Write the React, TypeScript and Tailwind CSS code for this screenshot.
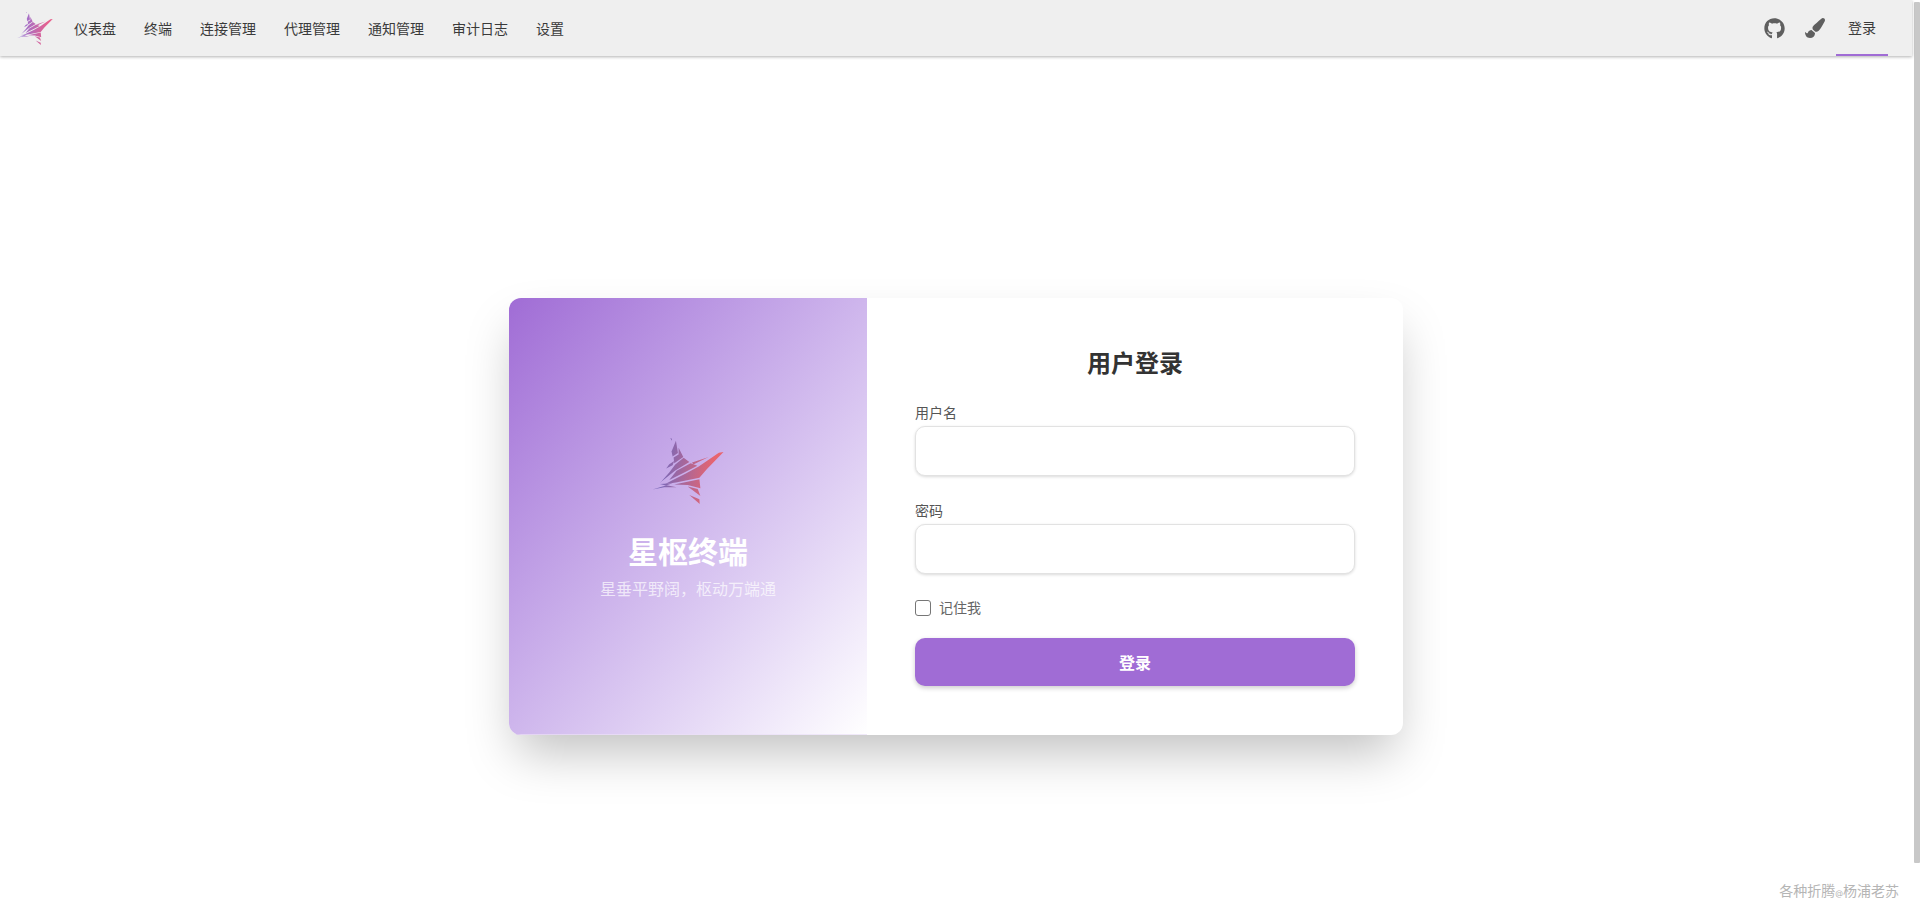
import { FaGithub, FaPaintBrush } from "react-icons/fa";

const fontStack = "font-['Inter','Noto_Sans_CJK_SC',sans-serif]";

const navItems = ["仪表盘", "终端", "连接管理", "代理管理", "通知管理", "审计日志", "设置"];

// shard polygons of the star logo
const shards = [
  "M153 55 L158 57 L158 63 Z",
  "M170 63 L176 100 L160 110 L157 95 Z",
  "M178 84 L192 112 L165 130 L163 113 L178 104 Z",
  "M165 124 L160 136 L141 146 L150 133 Z",
  "M193 114 L210 127 L168 152 L128 184 L122 190 L150 158 L168 134 Z",
  "M214 130 L234 138 L195 158 L150 180 L172 153 Z",
  "M218 128 L268 112 L240 125 L222 134 Z",
  "M312 97 L298 99 L238 140 L198 162 L158 182 L138 192 L170 188 L240 174 L262 148 Z",
  "M122 192 L160 190 L140 197 Z",
  "M100 209 L142 196 L172 202 L135 202 Z",
  "M165 194 L240 178 L243 205 L205 195 Z",
  "M205 200 L235 207 L243 228 Z",
  "M210 225 L240 238 L241 252 Z",
];

function Logo({ id, from, to, className }: { id: string; from: string; to: string; className: string }) {
  return (
    <svg viewBox="100 55 212 197" className={className}>
      <defs>
        <linearGradient id={id} gradientUnits="userSpaceOnUse" x1="130" y1="150" x2="280" y2="170">
          <stop offset="0" stopColor={from} />
          <stop offset="1" stopColor={to} />
        </linearGradient>
      </defs>
      {shards.map((d) => (
        <path key={d} d={d} fill={`url(#${id})`} />
      ))}
    </svg>
  );
}

function Field({ label }: { label: string }) {
  return (
    <div className="flex flex-col">
      <label className="mb-[4px] text-[14px] leading-[18px] text-[#555]">{label}</label>
      <input className="h-[50px] w-full rounded-[10px] border border-[#e2e2e2] bg-white shadow-[0_1px_3px_rgba(0,0,0,0.15)] outline-none" />
    </div>
  );
}

export default function App() {
  return (
    <div className={`${fontStack} relative flex h-screen w-full overflow-hidden bg-white`}>
      <div className="relative flex min-w-0 flex-1 flex-col">
        <nav className="z-10 flex h-[56px] shrink-0 items-center bg-[#efefef] pl-[17px] pr-6 shadow-[0_1px_3px_rgba(0,0,0,0.3)]">
          <Logo id="logo-nav" from="#9a72d2" to="#e8608c" className="h-[33px] w-[36px]" />
          <ul className="ml-[7px] flex items-center">
            {navItems.map((item) => (
              <li key={item} className="px-[14px] text-[14px] font-normal text-[#3a3a3a]">
                {item}
              </li>
            ))}
          </ul>
          <div className="ml-auto flex h-full items-center">
            <FaGithub className="h-[21px] w-[21px] text-[#5f5f5f]" />
            <FaPaintBrush className="ml-[20px] h-[20px] w-[20px] text-[#5f5f5f]" />
            <div className="ml-[11px] flex h-full w-[52px] items-center justify-center border-b-2 border-[#a06cd5] text-[14px] font-normal text-[#3a3a3a]">
              登录
            </div>
          </div>
        </nav>

        <main className="flex flex-1 items-start justify-center pt-[242px]">
          <div className="flex h-[437px] w-[894px] overflow-hidden rounded-[12px] bg-white shadow-[0_25px_50px_-8px_rgba(0,0,0,0.25)]">
            <div className="flex w-[358px] shrink-0 flex-col items-center border-b border-white/70 bg-gradient-to-br from-[#a06cd5] to-white pt-[140px]">
              <Logo id="logo-card" from="#7a68b8" to="#e8656f" className="h-[66px] w-[72px]" />
              <h1 className="mt-[28px] text-[30px] leading-[40px] font-bold text-white">星枢终端</h1>
              <p className="mt-[5px] text-[16px] leading-[24px] text-white/70">星垂平野阔，枢动万端通</p>
            </div>
            <div className="flex flex-1 flex-col px-[48px] pt-[50px]">
              <h2 className="text-center text-[24px] leading-[32px] font-bold text-[#333]">用户登录</h2>
              <div className="mt-[24px] flex flex-col gap-[26px]">
                <Field label="用户名" />
                <Field label="密码" />
              </div>
              <label className="mt-[24px] flex items-center gap-[8px] text-[14px] leading-[20px] text-[#666]">
                <span className="h-[16px] w-[16px] rounded-[3px] border border-[#767676] bg-white" />
                记住我
              </label>
              <button className="mt-[20px] h-[48px] w-full rounded-[10px] bg-[#a06cd5] pt-[1px] text-[16px] font-bold text-white shadow-[0_2px_5px_rgba(0,0,0,0.2)]">
                登录
              </button>
            </div>
          </div>
        </main>

        <div className="absolute right-[13px] bottom-[16px] text-[14px] leading-[20px] text-[#b5b5b5]">
          各种折腾<span className="text-[8px]">@</span>杨浦老苏
        </div>
      </div>
      <div className="flex w-[8px] shrink-0 justify-end bg-white pt-[2px]">
        <div className="h-[861px] w-[6px] rounded-[1px] bg-[#c8c8c8]" />
      </div>
    </div>
  );
}
